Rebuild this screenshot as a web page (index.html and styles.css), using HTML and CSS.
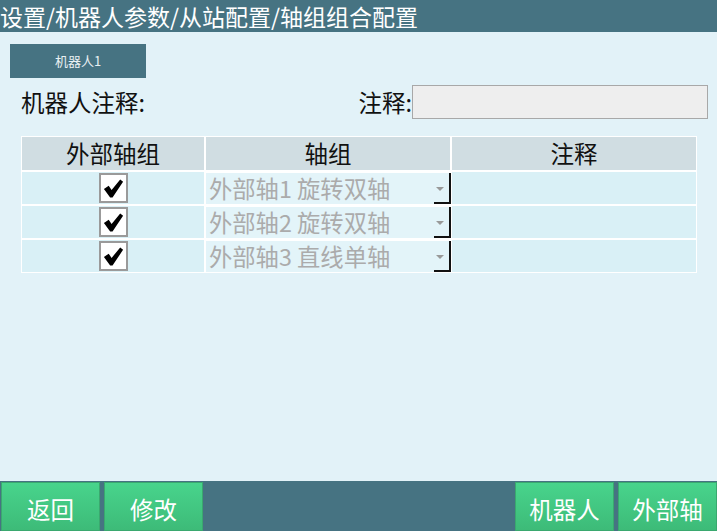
FILE: index.html
```html
<!DOCTYPE html>
<html>
<head>
<meta charset="utf-8">
<link rel="stylesheet" href="styles.css">
</head>
<body>
<div class="app">
  <div class="titlebar">设置/机器人参数/从站配置/轴组组合配置</div>
  <div class="content">
    <div class="tabs"><div class="tab">机器人1</div></div>
    <div class="notes">
      <div class="label">机器人注释:</div>
      <div class="note-right">
        <span class="label">注释:</span>
        <div class="input"></div>
      </div>
    </div>
    <div class="grid">
      <div class="hcell">外部轴组</div>
      <div class="hcell">轴组</div>
      <div class="hcell">注释</div>

      <div class="cell center"><span class="check"><svg viewBox="0 0 24 24" width="23" height="23"><path d="M2 12.5 L7 9 L10 13.5 L19 2.5 L22 5 L11 21.5 L8.5 21.5 Z" fill="#000"/></svg></span></div>
      <div class="cell sel"><span class="seltext">外部轴1 旋转双轴</span><span class="arrow"></span></div>
      <div class="cell"></div>

      <div class="cell center"><span class="check"><svg viewBox="0 0 24 24" width="23" height="23"><path d="M2 12.5 L7 9 L10 13.5 L19 2.5 L22 5 L11 21.5 L8.5 21.5 Z" fill="#000"/></svg></span></div>
      <div class="cell sel"><span class="seltext">外部轴2 旋转双轴</span><span class="arrow"></span></div>
      <div class="cell"></div>

      <div class="cell center"><span class="check"><svg viewBox="0 0 24 24" width="23" height="23"><path d="M2 12.5 L7 9 L10 13.5 L19 2.5 L22 5 L11 21.5 L8.5 21.5 Z" fill="#000"/></svg></span></div>
      <div class="cell sel"><span class="seltext">外部轴3 直线单轴</span><span class="arrow"></span></div>
      <div class="cell"></div>
    </div>
  </div>
  <div class="bottombar">
    <div class="btngroup">
      <div class="btn">返回</div>
      <div class="btn">修改</div>
    </div>
    <div class="btngroup">
      <div class="btn">机器人</div>
      <div class="btn">外部轴</div>
    </div>
  </div>
</div>
</body>
</html>
```
FILE: styles.css
```css
html, body {
  margin: 0;
  padding: 0;
}
body {
  width: 717px;
  height: 531px;
  overflow: hidden;
  font-family: "Noto Sans CJK SC", "Noto Sans", sans-serif;
  background: #e2f2f8;
}
.app {
  display: flex;
  flex-direction: column;
  height: 531px;
}
.titlebar {
  height: 32px;
  background: #467382;
  color: #ffffff;
  font-size: 23px;
  line-height: 32px;
  white-space: nowrap;
  overflow: hidden;
}
.content {
  flex: 1;
  padding: 12px 0 0 0;
}
.tabs {
  display: flex;
  padding-left: 10px;
}
.tab {
  width: 136px;
  height: 34px;
  background: #467382;
  color: #e8f0f2;
  font-size: 13px;
  line-height: 34px;
  text-align: center;
}
.notes {
  display: flex;
  justify-content: space-between;
  align-items: center;
  height: 34px;
  margin-top: 7px;
  padding-left: 21px;
  padding-right: 9px;
}
.label {
  font-size: 23.5px;
  color: #111;
  line-height: 34px;
}
.note-right {
  display: flex;
  align-items: center;
}
.input {
  width: 294px;
  height: 32px;
  background: #eeeeee;
  border: 1px solid #a8a8a8;
}
.grid {
  margin: 17px 0 0 21px;
  width: 676px;
  box-sizing: border-box;
  background: #ffffff;
  padding: 1px;
  display: grid;
  grid-template-columns: 182px 244px 244px;
  grid-template-rows: 33px 32px 32px 32px;
  gap: 2px 2px;
}
.hcell {
  background: #d0dde2;
  font-size: 23.5px;
  color: #111;
  text-align: center;
  line-height: 33px;
}
.cell {
  background: #d9f0f6;
  position: relative;
}
.center {
  display: flex;
  align-items: center;
  justify-content: center;
}
.check {
  box-sizing: border-box;
  width: 29px;
  height: 30px;
  background: #ffffff;
  border: 2px solid #9a9a9a;
  display: flex;
  align-items: center;
  justify-content: center;
}
.sel {
  background: #e3f4f9;
  border-right: 2px solid #111;
  border-bottom: 2px solid #111;
  box-sizing: border-box;
  display: flex;
  align-items: center;
  margin-top: 1px;
  margin-right: -1px;
}
.sel::before {
  content: "";
  position: absolute;
  left: 0;
  bottom: -2px;
  height: 2px;
  width: 228px;
  background: #e3f4f9;
}
.seltext {
  font-size: 23.3px;
  color: #ababab;
  padding-left: 3px;
  white-space: nowrap;
  line-height: 30px;
}
.arrow {
  position: absolute;
  right: 5px;
  top: 14px;
  width: 0;
  height: 0;
  border-left: 4px solid transparent;
  border-right: 4px solid transparent;
  border-top: 4px solid #999;
}
.bottombar {
  height: 50px;
  background: #467382;
  display: flex;
  justify-content: space-between;
  align-items: flex-end;
}
.btngroup {
  display: flex;
  gap: 4px;
  padding-left: 1px;
}
.btn {
  box-sizing: border-box;
  width: 99px;
  height: 49px;
  background: linear-gradient(#48d48c, #3dbb78);
  border: 1px solid #3aa86f;
  color: #ffffff;
  font-size: 23.5px;
  line-height: 52px;
  text-align: center;
}
```
